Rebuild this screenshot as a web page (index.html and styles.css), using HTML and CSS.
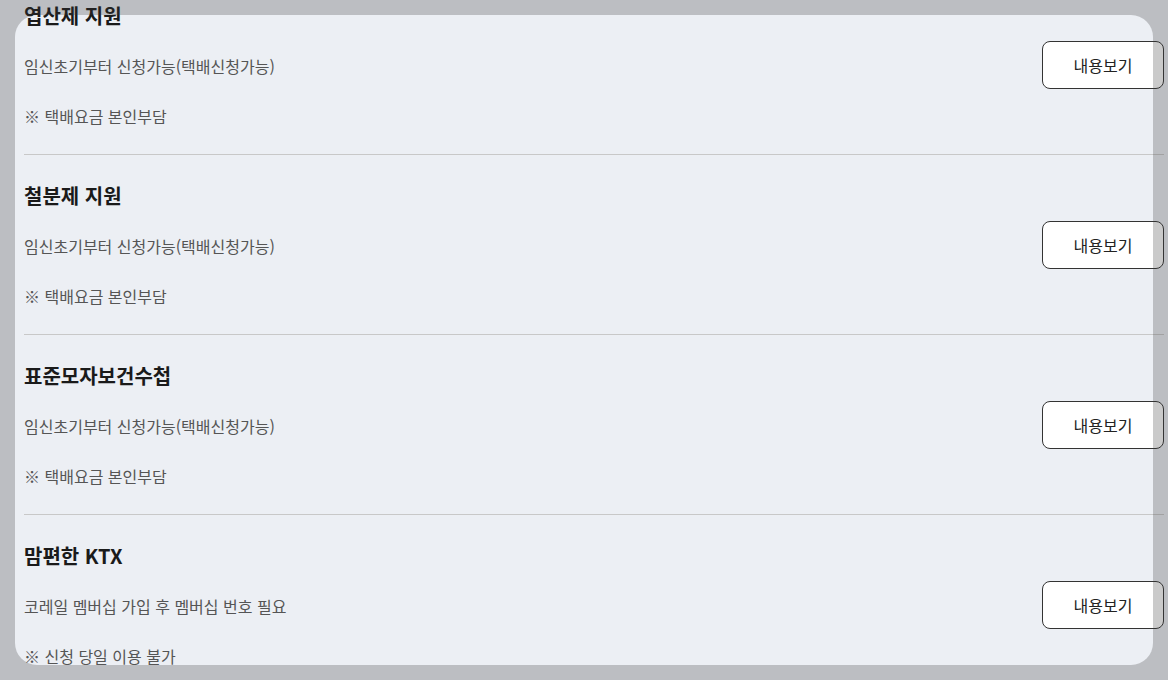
FILE: index.html
```html
<!DOCTYPE html>
<html lang="ko">
<head>
<meta charset="utf-8">
<link rel="stylesheet" href="styles.css">
</head>
<body>
<div class="page">
  <ul class="list">
    <li class="item">
      <div class="info">
        <h3 class="title">엽산제 지원</h3>
        <p class="desc">임신초기부터 신청가능(택배신청가능)</p>
        <p class="note">※ 택배요금 본인부담</p>
      </div>
      <button class="btn">내용보기</button>
    </li>
    <li class="item">
      <div class="info">
        <h3 class="title">철분제 지원</h3>
        <p class="desc">임신초기부터 신청가능(택배신청가능)</p>
        <p class="note">※ 택배요금 본인부담</p>
      </div>
      <button class="btn">내용보기</button>
    </li>
    <li class="item">
      <div class="info">
        <h3 class="title">표준모자보건수첩</h3>
        <p class="desc">임신초기부터 신청가능(택배신청가능)</p>
        <p class="note">※ 택배요금 본인부담</p>
      </div>
      <button class="btn">내용보기</button>
    </li>
    <li class="item">
      <div class="info">
        <h3 class="title">맘편한 KTX</h3>
        <p class="desc">코레일 멤버십 가입 후 멤버십 번호 필요</p>
        <p class="note">※ 신청 당일 이용 불가</p>
      </div>
      <button class="btn">내용보기</button>
    </li>
  </ul>
  <div class="frame"></div>
</div>
</body>
</html>
```

FILE: styles.css
```css
* { box-sizing: border-box; }
html, body {
  margin: 0;
  padding: 0;
  background: #eceff4;
  overflow: hidden;
  font-family: "Noto Sans CJK KR", "Noto Sans", sans-serif;
}
.page {
  position: relative;
  width: 1168px;
  height: 680px;
  overflow: hidden;
  background: #eceff4;
}
.list {
  list-style: none;
  margin: -25px 0 0 0;
  padding: 0 4px 0 24px;
}
.item {
  display: flex;
  align-items: center;
  justify-content: space-between;
  height: 180px;
  border-bottom: 1px solid #c8c8c8;
}
.info {
  display: flex;
  flex-direction: column;
}
.title {
  margin: 0;
  font-size: 20px;
  line-height: 26px;
  font-weight: 700;
  color: #1a1a1a;
}
.desc, .note {
  margin: 0;
  font-size: 16px;
  line-height: 22px;
  color: #555;
}
.desc { margin-top: 26px; }
.note { margin-top: 28px; }
.btn {
  width: 122px;
  height: 48px;
  background: #fff;
  border: 1px solid #333;
  border-radius: 8px;
  font-family: "Noto Sans CJK KR", "Noto Sans", sans-serif;
  font-size: 16px;
  color: #222;
  padding: 0;
}
.frame {
  position: absolute;
  left: 15px;
  top: 15px;
  width: 1138px;
  height: 650px;
  border-radius: 22px;
  box-shadow: 0 0 0 2000px rgba(60, 60, 60, 0.27);
  pointer-events: none;
}
```
